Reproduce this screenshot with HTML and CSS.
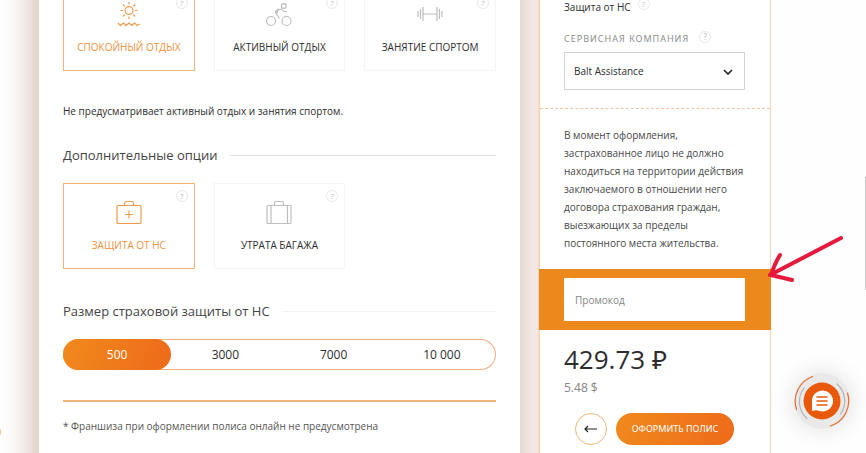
FILE: index.html
```html
<!DOCTYPE html>
<html lang="ru">
<head>
<meta charset="utf-8">
<meta name="viewport" content="width=device-width, initial-scale=1">
<title>Оформление полиса</title>
<link rel="stylesheet" href="styles.css">
</head>
<body>
<div class="page">
  <main class="form">
    <div class="cards cards-top">
      <button type="button" class="card card-active" aria-pressed="true">
        <span class="help help-corner">?</span>
        <svg class="icon" viewBox="0 0 28 28"><circle cx="14" cy="10.500" r="3.900"/><path d="M14 2V4.500M14 16.500v2.500M5.500 10.500H8M20 10.500h2.500M8 4.500 9.800 6.300M18.200 14.700l1.800 1.800M20 4.500 18.200 6.300M9.800 14.700l-1.800 1.800M3 23l2.500 2.500 2.800-2.500 2.800 2.500 2.800-2.500 2.800 2.500 2.800-2.500 2.800 2.500 2.500-1.500"/></svg>
        <span>СПОКОЙНЫЙ ОТДЫХ</span>
      </button>
      <button type="button" class="card" aria-pressed="false">
        <span class="help help-corner">?</span>
        <svg class="icon" viewBox="0 0 28 28"><circle cx="6" cy="21" r="4.500"/><circle cx="21.500" cy="21" r="4.500"/><circle cx="18.800" cy="6" r="2.400"/><path d="M14.500 18.500l-3-4.500 1.500-4 3.500-1 2 2.500h3.500M11 14l-.5-2.500 3-2.500"/></svg>
        <span>АКТИВНЫЙ ОТДЫХ</span>
      </button>
      <button type="button" class="card" aria-pressed="false">
        <span class="help help-corner">?</span>
        <svg class="icon" viewBox="0 0 28 28"><path d="M7 7v14M4.500 9v10M2 11v6M7 14h14M21 7v14M23.500 9v10M26 11v6"/></svg>
        <span>ЗАНЯТИЕ СПОРТОМ</span>
      </button>
    </div>
    <p class="note">Не предусматривает активный отдых и занятия спортом.</p>

    <h2 class="section-title">Дополнительные опции</h2>
    <div class="cards">
      <button type="button" class="card card-active" aria-pressed="true">
        <span class="help help-corner">?</span>
        <svg class="icon" viewBox="0 0 28 28"><rect x="2" y="7.500" width="24" height="18" rx="1"/><path d="M9.500 7.500V5a1.500 1.500 0 0 1 1.500-1.500h6A1.500 1.500 0 0 1 18.500 5v2.500M14 12.500v8M10 16.500h8"/></svg>
        <span>ЗАЩИТА ОТ НС</span>
      </button>
      <button type="button" class="card" aria-pressed="false">
        <span class="help help-corner">?</span>
        <svg class="icon" viewBox="0 0 28 28"><rect x="2" y="7.500" width="24" height="18" rx="1"/><path d="M9.500 7.500V5a1.500 1.500 0 0 1 1.500-1.500h6A1.500 1.500 0 0 1 18.500 5v2.500M6 7.500v18M22.500 7.500v18"/></svg>
        <span>УТРАТА БАГАЖА</span>
      </button>
    </div>

    <h2 class="section-title section-title-faint">Размер страховой защиты от НС</h2>
    <div class="segments" role="radiogroup" aria-label="Размер страховой защиты от НС">
      <label class="segment"><input type="radio" name="sum" checked><span>500</span></label>
      <label class="segment"><input type="radio" name="sum"><span>3000</span></label>
      <label class="segment"><input type="radio" name="sum"><span>7000</span></label>
      <label class="segment"><input type="radio" name="sum"><span>10 000</span></label>
    </div>
    <hr class="divider">
    <p class="footnote">* Франшиза при оформлении полиса онлайн не предусмотрена</p>
  </main>

  <aside class="summary">
    <div class="options">
      <p class="option">Защита от НС <span class="help">?</span></p>
      <div class="field-head">
        <label for="company">СЕРВИСНАЯ КОМПАНИЯ</label>
        <span class="help">?</span>
      </div>
      <div class="select-box">
        <select id="company"><option>Balt Assistance</option></select>
        <svg class="chevron" viewBox="0 0 10 6"><path d="M1 1l4 4 4-4"/></svg>
      </div>
    </div>
    <p class="terms">В момент оформления, застрахованное лицо не должно находиться на территории действия заключаемого в отношении него договора страхования граждан, выезжающих за пределы постоянного места жительства.</p>
    <div class="promo">
      <input type="text" placeholder="Промокод" aria-label="Промокод">
      <svg class="pointer" viewBox="0 0 76 52"><path d="M73 5 2 42M12 22Q7 30 3 42L24 47"/></svg>
    </div>
    <div class="total">
      <p class="price">429.73 ₽</p>
      <p class="price-usd">5.48 $</p>
      <div class="actions">
        <button type="button" class="back" aria-label="Назад"><svg viewBox="0 0 14 8"><path d="M13 4H1M4 1 1 4l3 3"/></svg></button>
        <button type="button" class="submit">ОФОРМИТЬ ПОЛИС</button>
      </div>
    </div>
  </aside>

  <button type="button" class="chat" aria-label="Чат">
    <svg viewBox="0 0 56 56">
      <circle cx="28" cy="28" r="18.500" fill="#e8590c"/>
      <path d="M18 38V28a10.500 10.500 0 1 1 6 9.500Q21 37 18 38z" fill="#fff"/>
      <g fill="none" stroke-linecap="round">
        <path d="M23 24h10M23 28h10M23 32h10" stroke="#e8590c" stroke-width="1.500"/>
        <path d="M18.500 3.500A26.500 26.500 0 0 0 2.500 36.500M53.500 20A26.500 26.500 0 0 1 36.500 53" stroke="#ea6a2a" stroke-width="1.200"/>
        <path d="M10 15A22.500 22.500 0 0 0 13 45.500M43 11A22.500 22.500 0 0 1 46.500 41" stroke="#b5b5b5" stroke-width="1.200"/>
      </g>
    </svg>
  </button>
  <span class="edge-dot"></span>
  <span class="scroll-thumb"></span>
</div>
</body>
</html>
```

FILE: styles.css
```css
* { box-sizing: border-box; }

body {
  margin: 0;
  font-family: "Open Sans", "Noto Sans", sans-serif;
  font-size: 10px;
  line-height: 20px;
  color: #2d2d2d;
  background: #fff;
}

h2, p { margin: 0; }

button, input, select { font: inherit; color: inherit; }

.page {
  position: relative;
  display: grid;
  grid-template-columns: minmax(0, 1fr) 233px;
  column-gap: 18px;
  min-height: 100vh;
  padding: 0 95px 0 39px;
  overflow: hidden;
  background:
    linear-gradient(90deg, #fff 0, #fbf9f8 12px, #efe8e5 26px, #e3d3cd 38px, #e3d9d1 39px, transparent 39px),
    linear-gradient(270deg, #fefefe 95px, #f3e8e5 327px, #f2e7e3 334px, #e5dad2 346px, #fff 347px);
}

.form {
  padding: 0 24px;
  background: #fff;
}

.cards {
  display: grid;
  grid-template-columns: repeat(3, minmax(0, 1fr));
  gap: 19px;
}

.cards-top { margin-top: -15px; }

.card {
  position: relative;
  display: flex;
  flex-direction: column;
  align-items: center;
  justify-content: space-between;
  height: 86px;
  padding: 14px 0;
  border: 1px solid #f5f5f5;
  background: #fff;
  line-height: 18px;
}

.card-active {
  border-color: #f3b271;
  color: #ee9240;
}

.icon {
  width: 28px;
  height: 28px;
  fill: none;
  stroke: #bdbdbd;
  stroke-width: 1.2;
  stroke-linejoin: round;
}

.card-active .icon { stroke: #f09a4c; }

.help {
  display: inline-block;
  width: 12px;
  height: 12px;
  border: 1px solid #e8e8e8;
  border-radius: 50%;
  font-size: 8px;
  line-height: 10px;
  text-align: center;
  color: #c0c0c0;
}

.help-corner {
  position: absolute;
  top: 6px;
  right: 6px;
}

.cards-top .help-corner { top: 11px; }

.note { margin-top: 30px; }

.section-title {
  display: flex;
  align-items: center;
  gap: 12px;
  margin-top: 24px;
  margin-bottom: 18px;
  font-size: 13px;
  font-weight: 400;
  color: #444;
}

.section-title::after {
  content: "";
  flex: 1;
  height: 1px;
  background: #e3e3e3;
}

.section-title-faint { margin-top: 32px; }
.section-title-faint::after { background: #f3f3f3; }

.segments {
  display: grid;
  grid-template-columns: repeat(4, 1fr);
  border-radius: 16px;
  box-shadow: inset 0 0 0 1px #f1ac7d;
}

.segment input {
  position: absolute;
  opacity: 0;
}

.segment span {
  display: block;
  border-radius: 16px;
  font-size: 12px;
  line-height: 31px;
  text-align: center;
}

.segment input:checked + span {
  background: linear-gradient(110deg, #f08a1d, #ee6a1a);
  color: #fff;
}

.divider {
  height: 2px;
  margin: 30px 0 14px;
  border: 0;
  background: #efb47a;
}

.footnote { color: #555; }

.summary {
  border: solid #f8d6b8;
  border-width: 0 1px 0 2px;
  background: #fff;
}

.options {
  padding: 0 25px 18px 24px;
  border-bottom: 1px dashed #f3c3a0;
}

.option {
  display: flex;
  gap: 7px;
  margin-top: -3px;
}

.option .help { margin-top: 1px; }

.field-head {
  display: flex;
  gap: 10px;
  margin: 12px 0 3px;
  font-family: "Noto Sans", "Open Sans", sans-serif;
  font-size: 9px;
  color: #8c8c8c;
  letter-spacing: 1px;
}

.field-head .help {
  margin-top: 2px;
  letter-spacing: 0;
}

.select-box { position: relative; }

.select-box select {
  width: 100%;
  height: 38px;
  padding: 0 9px;
  border: 1px solid #d2d2d2;
  border-radius: 0;
  background: #fff;
  appearance: none;
}

.chevron {
  position: absolute;
  top: 17px;
  right: 12px;
  width: 10px;
  height: 6px;
  fill: none;
  stroke: #222;
  stroke-width: 1.6;
}

.terms {
  padding: 17px 20px 17px 24px;
  line-height: 18px;
  color: #484848;
}

.promo {
  position: relative;
  margin: 0 -1px;
  padding: 9px 26px 9px 25px;
  background: #ec891d;
}

.promo input {
  display: block;
  width: 100%;
  height: 43px;
  padding: 0 11px;
  border: 0;
  background: #fff;
}

.promo input::placeholder { color: #858585; opacity: 1; }

.pointer {
  position: absolute;
  left: 229px;
  top: -36px;
  width: 76px;
  height: 52px;
  fill: none;
  stroke: #e6193c;
  stroke-width: 4;
  stroke-linecap: round;
  stroke-linejoin: round;
}

.total { padding: 13px 25px 8px 24px; }

.price {
  font-size: 26px;
  line-height: 32px;
}

.price-usd {
  margin-top: 3px;
  font-size: 12px;
  color: #858585;
}

.actions {
  display: flex;
  justify-content: center;
  gap: 9px;
  margin-top: 15px;
}

.back {
  display: grid;
  place-items: center;
  width: 32px;
  height: 32px;
  padding: 0;
  border: 1px solid #f2b57d;
  border-radius: 50%;
  background: #fff;
}

.back svg {
  width: 14px;
  height: 8px;
  fill: none;
  stroke: #222;
  stroke-width: 1.2;
}

.submit {
  width: 118px;
  height: 32px;
  padding: 0;
  border: 0;
  border-radius: 16px;
  background: linear-gradient(110deg, #f08a1d, #ee6a1a);
  font-family: "Noto Sans", "Open Sans", sans-serif;
  font-size: 9px;
  color: #fff;
}

.chat {
  position: absolute;
  right: 16px;
  bottom: 24px;
  width: 56px;
  height: 56px;
  padding: 0;
  border: 0;
  border-radius: 50%;
  background: #e9e9e9;
  box-shadow: 0 0 20px 4px #e9e9e9;
}

.chat svg { display: block; }

.edge-dot {
  position: absolute;
  left: -11px;
  bottom: 15px;
  width: 12px;
  height: 12px;
  border-radius: 50%;
  background: #f4bd80;
}

.scroll-thumb {
  position: absolute;
  right: 0;
  top: 177px;
  width: 1px;
  height: 113px;
  background: #c8c8c8;
}
```
